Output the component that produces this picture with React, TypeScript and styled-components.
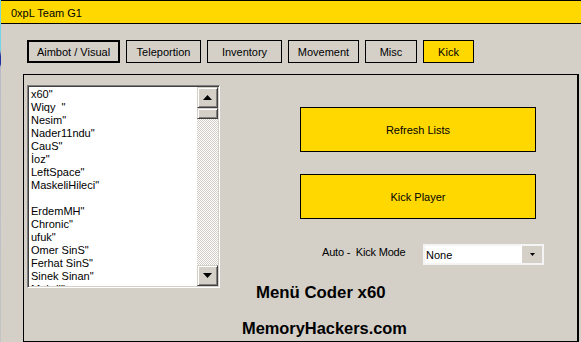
import React from "react";
import styled, { createGlobalStyle } from "styled-components";

const Global = createGlobalStyle`
  html, body { margin: 0; padding: 0; }
  body {
    width: 581px;
    height: 342px;
    overflow: hidden;
    background: linear-gradient(to bottom, #74d4ea 0, #74d4ea 50px, #8a9ab8 52px, #1d2fa0 56px, #1d2fa0 64px, #b8bcc8 67px, #c4c4c4 100%);
    font-family: "Liberation Sans", Arial, sans-serif;
    color: #000;
  }
`;

const Window = styled.div`
  width: 580px;
  height: 342px;
  margin-left: 1px;
  background: #d4d0c8;
  display: flex;
  flex-direction: column;
  font-size: 11px;
`;

const TitleBar = styled.div`
  height: 21px;
  border-top: 1px solid #000;
  border-bottom: 1px solid #000;
  background: #ffd800;
  display: flex;
  align-items: center;
  padding-left: 10px;
  padding-top: 1px;
  box-sizing: content-box;
`;

const Tabs = styled.div`
  display: flex;
  gap: 6px;
  padding: 16px 0 0 26px;
`;

const Tab = styled.div<{ $w: number; $focused?: boolean; $active?: boolean }>`
  box-sizing: border-box;
  width: ${(p) => p.$w}px;
  height: 23px;
  border: ${(p) => (p.$focused ? "2px" : "1px")} solid #000;
  background: ${(p) => (p.$active ? "#ffd800" : "#d4d0c8")};
  display: flex;
  align-items: center;
  justify-content: center;
  padding-top: 1px;
`;

const Panel = styled.div`
  box-sizing: border-box;
  margin: 11px 0 0 22px;
  width: 556px;
  height: 268px;
  border: 1px solid #000;
  border-right-width: 2px;
  display: grid;
  grid-template-columns: 193px 1fr;
  align-items: start;
  padding: 10px 0 0 3px;
`;

const ListBox = styled.div`
  box-sizing: border-box;
  width: 193px;
  height: 203px;
  border-top: 1px solid #808080;
  border-left: 1px solid #808080;
  border-right: 1px solid #ffffff;
  border-bottom: 1px solid #ffffff;
  display: flex;
  background: #fff;
  position: relative;
  &::after {
    content: "";
    position: absolute;
    inset: 0;
    pointer-events: none;
    box-shadow: inset 1px 1px #404040, inset -1px -1px #d4d0c8;
  }
`;

const Items = styled.div`
  flex: 1;
  overflow: hidden;
  padding: 1px 0 0 2px;
  margin: 1px 0 1px 1px;
`;

const Item = styled.div`
  height: 13px;
  line-height: 13px;
  white-space: pre;
`;

const ScrollBar = styled.div`
  width: 21px;
  margin: 1px 1px 1px 0;
  display: flex;
  flex-direction: column;
`;

const ScrollButton = styled.div<{ $h: number }>`
  box-sizing: border-box;
  height: ${(p) => p.$h}px;
  background: #d4d0c8;
  border-top: 1px solid #d4d0c8;
  border-left: 1px solid #d4d0c8;
  border-right: 1px solid #404040;
  border-bottom: 1px solid #404040;
  box-shadow: inset 1px 1px #ffffff, inset -1px -1px #808080;
  display: flex;
  align-items: center;
  justify-content: center;
`;

const Track = styled.div`
  flex: 1;
  background-color: #ffffff;
  background-image: conic-gradient(#ffffff 25%, #d4d0c8 0 50%, #ffffff 0 75%, #d4d0c8 0);
  background-size: 2px 2px;
`;

const RightColumn = styled.div`
  display: flex;
  flex-direction: column;
  align-items: flex-start;
  padding-top: 22px;
`;

const ActionButton = styled.div<{ $top: number }>`
  box-sizing: border-box;
  margin: ${(p) => p.$top}px 0 0 80px;
  width: 236px;
  height: 45px;
  border: 1px solid #000;
  background: #ffd800;
  display: flex;
  align-items: center;
  justify-content: center;
  font-size: 11px;
`;

const ModeRow = styled.div`
  margin: 25px 0 0 102px;
  display: flex;
  align-items: center;
  gap: 16px;
`;

const ModeLabel = styled.span`
  width: 85px;
  white-space: pre;
  letter-spacing: -0.2px;
  margin-top: -6px;
`;

const Combo = styled.div`
  box-sizing: border-box;
  width: 121px;
  height: 21px;
  background: #fff;
  border: 2px solid #f4f4f4;
  display: flex;
`;

const ComboValue = styled.div`
  flex: 1;
  display: flex;
  align-items: center;
  padding-left: 1px;
`;

const DropButton = styled.div`
  width: 20px;
  background: #d4d0c8;
  display: flex;
  align-items: center;
  justify-content: center;
`;

const Credit = styled.div<{ $left: number; $top: number; $size: number }>`
  margin: ${(p) => p.$top}px 0 0 ${(p) => p.$left}px;
  font-family: Arial, "Liberation Sans", sans-serif;
  font-weight: bold;
  font-size: ${(p) => p.$size}px;
  line-height: 18px;
  white-space: nowrap;
`;

const players = [
  'x60"',
  'Wiqy  "',
  'Nesim"',
  'Nader11ndu"',
  'CauS"',
  'İoz"',
  'LeftSpace"',
  'MaskeliHileci"',
  " ",
  'ErdemMH"',
  'Chronic"',
  'ufuk"',
  'Omer SinS"',
  'Ferhat SinS"',
  'Sinek Sinan"',
  'Mehdi"',
];

const tabs = [
  { label: "Aimbot / Visual", w: 93, focused: true },
  { label: "Teleportion", w: 75 },
  { label: "Inventory", w: 75 },
  { label: "Movement", w: 71 },
  { label: "Misc", w: 52 },
  { label: "Kick", w: 51, active: true },
];

const Arrow = ({ dir, size = 9 }: { dir: "up" | "down"; size?: number }) => {
  const h = Math.ceil(size / 2);
  return (
    <svg width={size} height={h} viewBox={`0 0 ${size} ${h}`}>
      {dir === "up" ? (
        <polygon points={`0,${h} ${size},${h} ${size / 2},0`} fill="#000" />
      ) : (
        <polygon points={`0,0 ${size},0 ${size / 2},${h}`} fill="#000" />
      )}
    </svg>
  );
};

export default function App() {
  return (
    <>
      <Global />
      <Window>
        <TitleBar>0xpL Team G1</TitleBar>
        <Tabs>
          {tabs.map((t) => (
            <Tab key={t.label} $w={t.w} $focused={t.focused} $active={t.active}>
              {t.label}
            </Tab>
          ))}
        </Tabs>
        <Panel>
          <ListBox>
            <Items>
              {players.map((p, i) => (
                <Item key={i}>{p}</Item>
              ))}
            </Items>
            <ScrollBar>
              <ScrollButton $h={21}>
                <Arrow dir="up" />
              </ScrollButton>
              <ScrollButton $h={11} />
              <Track />
              <ScrollButton $h={21}>
                <Arrow dir="down" />
              </ScrollButton>
            </ScrollBar>
          </ListBox>
          <RightColumn>
            <ActionButton $top={0}>Refresh Lists</ActionButton>
            <ActionButton $top={22}>Kick Player</ActionButton>
            <ModeRow>
              <ModeLabel>Auto -  Kick Mode</ModeLabel>
              <Combo>
                <ComboValue>None</ComboValue>
                <DropButton>
                  <Arrow dir="down" size={5} />
                </DropButton>
              </Combo>
            </ModeRow>
            <Credit $left={36} $top={19} $size={16.8}>Menü Coder x60</Credit>
            <Credit $left={22} $top={17} $size={16.4}>MemoryHackers.com</Credit>
          </RightColumn>
        </Panel>
      </Window>
    </>
  );
}
